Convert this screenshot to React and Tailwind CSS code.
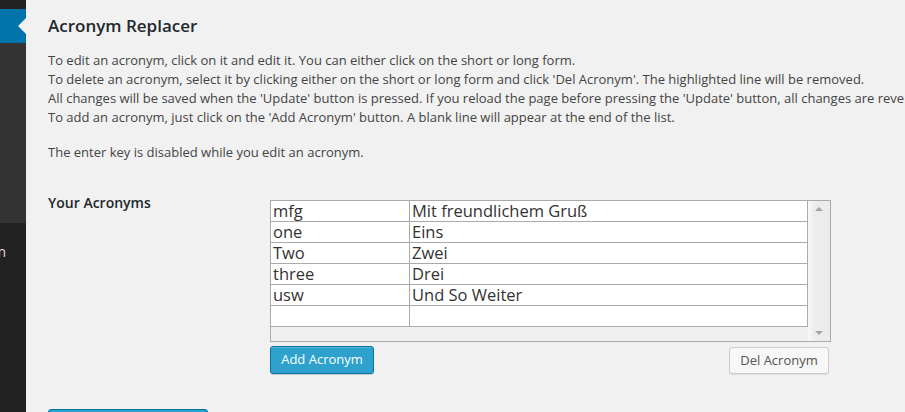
import React from "react";

const acronyms = [
  { short: "mfg", long: "Mit freundlichem Gruß" },
  { short: "one", long: "Eins" },
  { short: "Two", long: "Zwei" },
  { short: "three", long: "Drei" },
  { short: "usw", long: "Und So Weiter" },
  { short: "", long: "" },
];

const lines = [
  "To edit an acronym, click on it and edit it. You can either click on the short or long form.",
  "To delete an acronym, select it by clicking either on the short or long form and click 'Del Acronym'. The highlighted line will be removed.",
  "All changes will be saved when the 'Update' button is pressed. If you reload the page before pressing the 'Update' button, all changes are reverted.",
  "To add an acronym, just click on the 'Add Acronym' button. A blank line will appear at the end of the list.",
];

const Sidebar = () => (
  <div className="w-[26px] shrink-0 flex flex-col">
    <div className="h-[9px] bg-[#222]" />
    <div className="h-[34px] bg-[#0073aa] relative">
      <div className="absolute right-0 top-[9px] w-0 h-0 border-y-[8px] border-y-transparent border-r-[8px] border-r-[#f1f1f1]" />
    </div>
    <div className="h-[180px] bg-[#333]" />
    <div className="flex-1 bg-[#222] overflow-hidden">
      <div className="mt-[19px] mr-[20px] flex justify-end text-[14px] leading-[20px] text-[#ddd] whitespace-nowrap">
        Design
      </div>
    </div>
  </div>
);

const AcronymTable = () => (
  <div className="w-[561px] h-[142px] border border-[#aaa] flex bg-[#f0f0f0]">
    <div className="flex-1 flex flex-col">
      {acronyms.map((row, i) => (
        <div
          key={i}
          className="h-[21px] flex bg-white border-b border-r border-[#aaa] text-[16.5px] leading-[19px] text-[#333]"
        >
          <div className="w-[139px] border-r border-[#aaa] pl-[2px]">{row.short}</div>
          <div className="flex-1 pl-[2px]">{row.long}</div>
        </div>
      ))}
    </div>
    <div className="w-[22px] flex flex-col justify-between items-center py-[6px] bg-[linear-gradient(to_right,#f8f8f8,#ececec_30%,#ececec)]">
      <div className="w-0 h-0 border-x-[4px] border-x-transparent border-b-[4px] border-b-[#a3a3a3]" />
      <div className="w-0 h-0 border-x-[4px] border-x-transparent border-t-[4px] border-t-[#a3a3a3]" />
    </div>
  </div>
);

export default function App() {
  return (
    <div
      className="w-[905px] h-[412px] flex overflow-hidden bg-[#f1f1f1] text-[#444]"
      style={{ fontFamily: '"Open Sans", sans-serif' }}
    >
      <Sidebar />
      <div className="flex-1 pl-[22px] overflow-hidden whitespace-nowrap">
        <h2 className="pt-[11px] text-[17px] leading-[29px] text-[#23282d] font-semibold">
          Acronym Replacer
        </h2>
        <div className="mt-[11px] text-[13px] leading-[19px]">
          {lines.map((l) => (
            <p key={l}>{l}</p>
          ))}
        </div>
        <p className="mt-[16px] text-[13px] leading-[19px]">
          The enter key is disabled while you edit an acronym.
        </p>
        <div className="mt-[31px] flex">
          <div className="w-[222px] text-[14px] leading-[19px] font-semibold text-[#23282d]">
            Your Acronyms
          </div>
          <div className="mt-[7px]">
            <AcronymTable />
            <div className="mt-[4px] w-[561px] flex justify-between pr-[2px]">
              <button className="h-[28px] w-[104px] rounded-[3px] border border-[#0074a2] bg-[#2ea2cc] text-white text-[13px] shadow-[inset_0_1px_0_rgba(120,200,230,0.5),0_1px_0_rgba(0,0,0,0.15)]">
                Add Acronym
              </button>
              <button className="mt-[1px] h-[27px] w-[100px] rounded-[3px] border border-[#ccc] bg-[#f7f7f7] text-[#555] text-[13px] shadow-[0_1px_0_rgba(0,0,0,0.08)]">
                Del Acronym
              </button>
            </div>
          </div>
        </div>
        <button className="mt-[35px] h-[28px] w-[160px] rounded-[3px] border border-[#0074a2] bg-[#2ea2cc]" />
      </div>
    </div>
  );
}
